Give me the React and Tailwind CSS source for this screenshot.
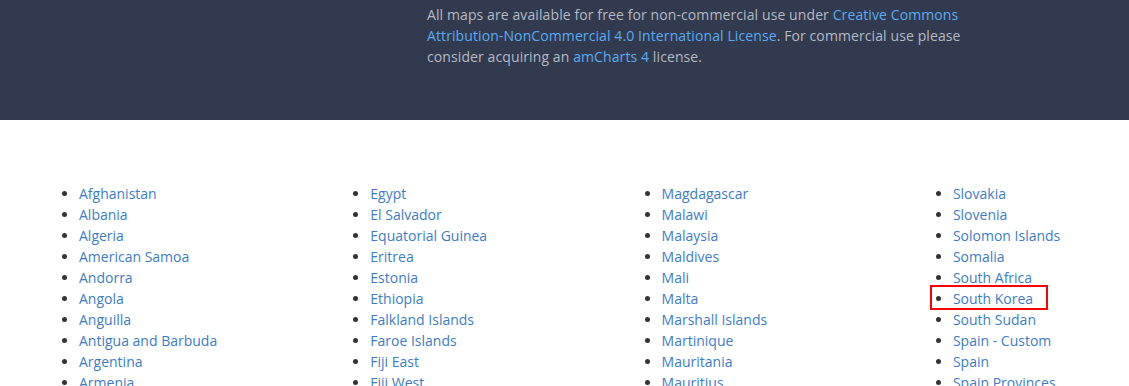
import React from "react";

const cols = [
  ["Afghanistan","Albania","Algeria","American Samoa","Andorra","Angola","Anguilla","Antigua and Barbuda","Argentina","Armenia"],
  ["Egypt","El Salvador","Equatorial Guinea","Eritrea","Estonia","Ethiopia","Falkland Islands","Faroe Islands","Fiji East","Fiji West"],
  ["Magdagascar","Malawi","Malaysia","Maldives","Mali","Malta","Marshall Islands","Martinique","Mauritania","Mauritius"],
  ["Slovakia","Slovenia","Solomon Islands","Somalia","South Africa","South Korea","South Sudan","Spain - Custom","Spain","Spain Provinces"],
];

export default function App() {
  return (
    <div className="w-[1129px] h-[386px] overflow-hidden bg-white" style={{ fontFamily: '"Open Sans", "Noto Sans", sans-serif' }}>
      <div className="h-[120px] bg-[#323a4f] pt-[4px] pl-[427px]">
        <p className="w-[545px] text-[14px] leading-[21px] tracking-[0.1px] text-[#b4b9c4]">
          All maps are available for free for non-commercial use under{" "}
          <a className="text-[#5aabf3]">Creative Commons Attribution-NonCommercial 4.0 International License</a>. For commercial use please consider acquiring an{" "}
          <a className="text-[#5aabf3]">amCharts 4</a> license.
        </p>
      </div>
      <div className="flex pl-[39px] pt-[63px]">
        {cols.map((c, i) => (
          <ul key={i} className="w-[291.3px] shrink-0 list-disc pl-[40px] text-[14px] leading-[21px] text-[#333]">
            {c.map((n) => (
              <li key={n} className="pl-0">
                {n === "South Korea" ? (
                  <span className="relative text-[#3d7cc4]">
                    {n}
                    <span className="absolute left-[-23px] top-[-4px] w-[118px] h-[25px] border-2 border-[#f00]"></span>
                  </span>
                ) : (
                  <a className="text-[#3d7cc4]">{n}</a>
                )}
              </li>
            ))}
          </ul>
        ))}
      </div>
    </div>
  );
}
